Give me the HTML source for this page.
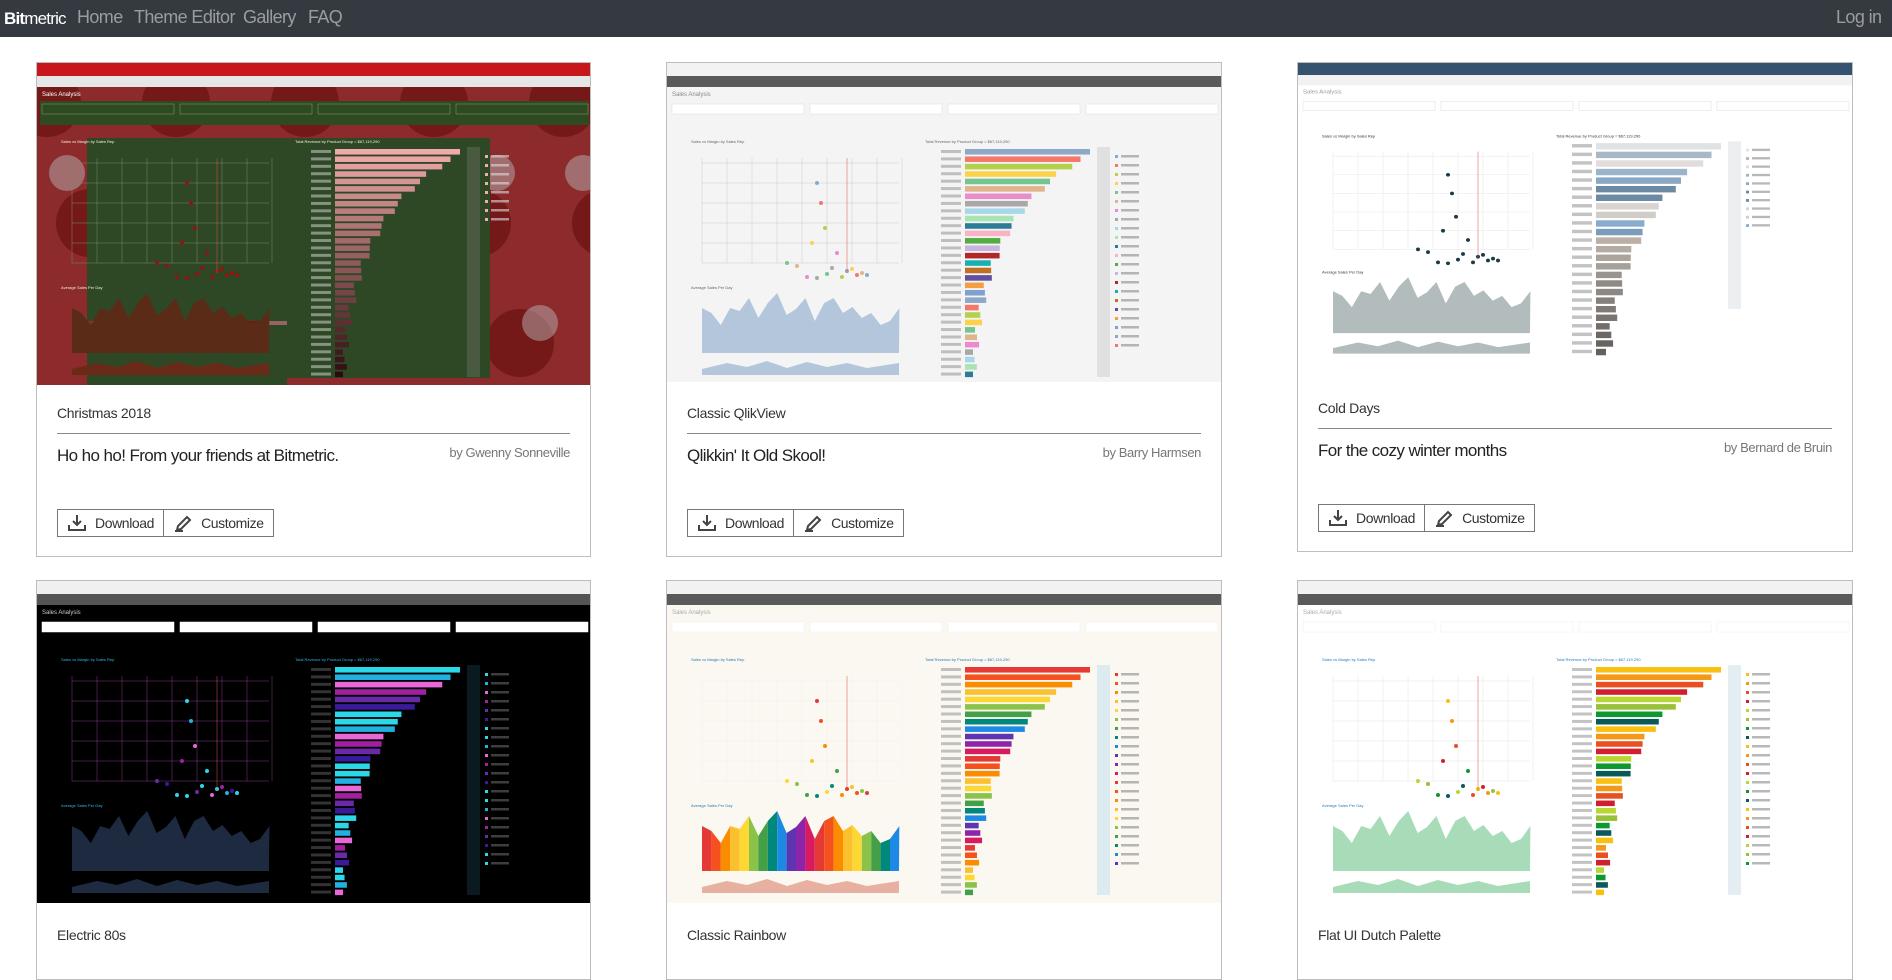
<!DOCTYPE html>
<html><head><meta charset="utf-8">
<style>
*{box-sizing:border-box;margin:0;padding:0}
html,body{width:1892px;height:931px;overflow:hidden;background:#fff;font-family:"Liberation Sans",sans-serif;color:#333}
.nav{position:absolute;left:0;top:0;width:1892px;height:37px;background:#343a40}
.nav a{position:absolute;top:7px;font-size:18px;color:#9a9da0;text-decoration:none;letter-spacing:-0.6px}
.logo{position:absolute;left:4px;top:9px;color:#fff;font-size:17px;letter-spacing:-0.8px}
.logo b{font-weight:bold}
.card{position:absolute;border:1px solid #bdbdbd;background:#fff}
.img{position:absolute;left:0;top:0;width:100%;overflow:hidden}
.img svg{display:block}
.ttl{position:absolute;left:20px;font-size:14px;color:#333;letter-spacing:-0.3px}
.hr{position:absolute;left:20px;right:20px;height:1px;background:#888}
.desc{position:absolute;left:20px;font-size:17px;color:#222;letter-spacing:-0.6px}
.auth{position:absolute;right:20px;font-size:13px;color:#777;letter-spacing:-0.4px}
.btns{position:absolute;left:20px;height:28px;display:flex}
.btn{height:28px;border:1px solid #777;display:flex;align-items:center;padding:0 9px;font-size:14px;color:#333;letter-spacing:-0.4px;background:#fff}
.btn+.btn{border-left:none}
.btn svg{margin-right:8px}
</style></head><body>
<div class="nav">
<div class="logo"><b>Bit</b>metric</div>
<a style="left:77px">Home</a>
<a style="left:134px">Theme Editor</a>
<a style="left:243px">Gallery</a>
<a style="left:308px">FAQ</a>
<a style="left:1836px">Log in</a>
</div>

<div class="card" style="left:36px;top:62px;width:555px;height:495px">
<div class="img" id="d1" style="height:322px"></div>
<div class="ttl" style="top:342px">Christmas 2018</div>
<div class="hr" style="top:370px"></div>
<div class="desc" style="top:383px">Ho ho ho! From your friends at Bitmetric.</div>
<div class="auth" style="top:382px">by Gwenny Sonneville</div>
<div class="btns" style="top:446px"><div class="btn"><svg width="20" height="18" viewBox="0 0 20 18"><path d="M10 1v10M6 7l4 4 4-4M2 11v5h16v-5" fill="none" stroke="#444" stroke-width="2"/></svg>Download</div><div class="btn"><svg width="20" height="18" viewBox="0 0 20 18"><path d="M4 16l1-4 9-9 3 3-9 9z M2 17h8" fill="none" stroke="#444" stroke-width="2"/></svg>Customize</div></div>
</div>

<div class="card" style="left:666px;top:62px;width:556px;height:495px">
<div class="img" id="d2" style="height:319px"></div>
<div class="ttl" style="top:342px">Classic QlikView</div>
<div class="hr" style="top:370px"></div>
<div class="desc" style="top:383px">Qlikkin' It Old Skool!</div>
<div class="auth" style="top:382px">by Barry Harmsen</div>
<div class="btns" style="top:446px"><div class="btn"><svg width="20" height="18" viewBox="0 0 20 18"><path d="M10 1v10M6 7l4 4 4-4M2 11v5h16v-5" fill="none" stroke="#444" stroke-width="2"/></svg>Download</div><div class="btn"><svg width="20" height="18" viewBox="0 0 20 18"><path d="M4 16l1-4 9-9 3 3-9 9z M2 17h8" fill="none" stroke="#444" stroke-width="2"/></svg>Customize</div></div>
</div>

<div class="card" style="left:1297px;top:62px;width:556px;height:490px">
<div class="img" id="d3" style="height:300px"></div>
<div class="ttl" style="top:337px">Cold Days</div>
<div class="hr" style="top:365px"></div>
<div class="desc" style="top:378px">For the cozy winter months</div>
<div class="auth" style="top:377px">by Bernard de Bruin</div>
<div class="btns" style="top:441px"><div class="btn"><svg width="20" height="18" viewBox="0 0 20 18"><path d="M10 1v10M6 7l4 4 4-4M2 11v5h16v-5" fill="none" stroke="#444" stroke-width="2"/></svg>Download</div><div class="btn"><svg width="20" height="18" viewBox="0 0 20 18"><path d="M4 16l1-4 9-9 3 3-9 9z M2 17h8" fill="none" stroke="#444" stroke-width="2"/></svg>Customize</div></div>
</div>

<div class="card" style="left:36px;top:580px;width:555px;height:400px">
<div class="img" id="d4" style="height:322px"></div>
<div class="ttl" style="top:346px">Electric 80s</div>
</div>
<div class="card" style="left:666px;top:580px;width:556px;height:400px">
<div class="img" id="d5" style="height:322px"></div>
<div class="ttl" style="top:346px">Classic Rainbow</div>
</div>
<div class="card" style="left:1297px;top:580px;width:556px;height:400px">
<div class="img" id="d6" style="height:322px"></div>
<div class="ttl" style="top:346px">Flat UI Dutch Palette</div>
</div>

<script>
function dash(id,t){
 var W=555,H=id=='d3'?300:322;var s='<svg width="'+W+'" height="'+H+'" viewBox="0 0 555 322" preserveAspectRatio="none">';
 s+='<rect width="555" height="322" fill="'+t.bg+'"/>';
 if(t.xmas){for(var i=0;i<14;i++){s+='<circle cx="'+(i*43+10)+'" cy="'+((i%3)*120+40)+'" r="34" fill="#6e1414" opacity=".8"/><circle cx="'+(i*43+30)+'" cy="'+((i%2)*150+110)+'" r="18" fill="#b8b0b0" opacity=".5"/>';}}
 s+='<rect width="555" height="13" fill="'+t.tb1+'"/><rect y="13" width="555" height="11" fill="'+t.tb2+'"/>';
 s+='<text x="5" y="33" font-size="6" fill="'+t.tx+'" font-family="Liberation Sans">Sales Analysis</text>';
 if(t.fp)s+='<rect x="3" y="38" width="549" height="24" fill="'+t.fp+'"/>';
 for(var i=0;i<4;i++)s+='<rect x="'+(5+i*138)+'" y="41" width="132" height="10" fill="'+t.fb+'" stroke="'+t.fs+'" stroke-width=".5"/>';
 if(t.pan){s+='<rect x="50" y="75" width="200" height="183" fill="'+t.pan+'"/><rect x="50" y="262" width="200" height="115" fill="'+t.pan+'"/><rect x="250" y="75" width="203" height="240" fill="'+t.pan+'"/>';}
 s+='<text x="24" y="80" font-size="4" fill="'+t.tt+'" font-family="Liberation Sans">Sales vs Margin by Sales Rep</text>';
 s+='<text x="258" y="80" font-size="4" fill="'+t.tt+'" font-family="Liberation Sans">Total Revenue by Product Group = $67,119,290</text>';
 for(var i=0;i<9;i++)s+='<line x1="'+(35+i*25)+'" y1="95" x2="'+(35+i*25)+'" y2="200" stroke="'+t.grid+'" stroke-width=".5"/>';
 for(var i=0;i<6;i++)s+='<line x1="35" y1="'+(100+i*20)+'" x2="232" y2="'+(100+i*20)+'" stroke="'+t.grid+'" stroke-width=".5"/>';
 var pts=[[170,120,0],[174,140,1],[178,165,2],[165,180,3],[140,200,4],[150,203,5],[190,190,6],[185,205,7],[200,208,0],[210,212,1],[195,214,2],[205,206,3],[180,211,4],[215,210,5],[160,214,6],[170,215,7],[220,212,0]];
 pts.forEach(function(p){s+='<circle cx="'+(p[0]-20)+'" cy="'+p[1]+'" r="2" fill="'+(t.dot||t.bars[p[2]%t.bars.length])+'"/>';});
 s+='<line x1="180" y1="95" x2="180" y2="210" stroke="#e05040" stroke-width=".5"/>';
 var a='M35 290';var ys=[245,250,262,245,248,235,255,240,230,252,246,235,258,240,235,250,244,255,250,262,258,245];
 ys.forEach(function(y,i){a+=' L'+(35+i*9.4)+' '+y;});a+=' L232 290 Z';
 s+='<text x="24" y="226" font-size="4" fill="'+t.tt+'" font-family="Liberation Sans">Average Sales Per Day</text>';
 if(t.rainbow){for(var i=0;i<21;i++)s+='<clipPath id="c'+id+i+'"><rect x="'+(35+i*9.4)+'" y="220" width="9.4" height="80"/></clipPath><path d="'+a+'" fill="'+t.bars[i%t.bars.length]+'" clip-path="url(#c'+id+i+')"/>';}
 else s+='<path d="'+a+'" fill="'+t.area+'"/>';
 s+='<path d="M35 306 L60 300 L80 304 L100 298 L120 305 L140 299 L160 304 L180 300 L200 305 L232 300 L232 312 L35 312Z" fill="'+t.area2+'"/>';
 var n=t.n||31,bh=(230/n);
 for(var i=0;i<n;i++){var w=Math.max(8,125*Math.pow(0.9,i)+(i%3)*3);var c=t.bars[i%t.bars.length];if(t.grad)c=t.grad(i,n);
  s+='<rect x="298" y="'+(86+i*bh)+'" width="'+w+'" height="'+(bh*0.75)+'" fill="'+c+'"/>';
  s+='<rect x="'+(274)+'" y="'+(87+i*bh)+'" width="20" height="'+(bh*0.4)+'" fill="'+t.lbl+'" opacity=".5"/>';}
 s+='<rect x="430" y="84" width="13" height="'+(t.n?180:230)+'" fill="'+t.sb+'"/>';
 for(var i=0;i<(t.legend||22);i++)s+='<rect x="448" y="'+(92+i*9)+'" width="3" height="3" fill="'+t.bars[i%t.bars.length]+'"/><rect x="454" y="'+(92+i*9)+'" width="18" height="2.5" fill="'+t.lbl+'" opacity=".6"/>';
 s+='</svg>';document.getElementById(id).innerHTML=s;}
var rb=['#e53935','#f4511e','#fb8c00','#fbc02d','#fdd835','#8bc34a','#43a047','#00897b','#1e88e5','#5e35b1','#8e24aa','#d81b60'];
dash('d1',{xmas:1,bg:'#8c2a2c',tb1:'#c8161d',tb2:'#e6e6e6',tx:'#fff',fp:'#2e4a22',fb:'#2e4a22',fs:'#8a9a70',pan:'#2e4826',tt:'#f0f0e0',grid:'#7a8a60',dot:'#9a1010',area:'#5a2c18',area2:'#6a2a18',bars:['#e8b0b0'],grad:function(i,n){var k=i/n;return 'rgb('+Math.round(240-200*k)+','+Math.round(170-165*k)+','+Math.round(170-160*k)+')';},lbl:'#ddd',sb:'#4a5a40',legend:8});
dash('d2',{bg:'#f4f4f4',tb1:'#f2f2f2',tb2:'#5a5a5a',tx:'#888',fb:'#fff',fs:'#ddd',tt:'#666',grid:'#ccc',area:'#b4c6dc',area2:'#b4c6dc',bars:['#8ea9c8','#f4786a','#b4d04c','#fcd24c','#76c490','#e0b48c','#e88ccc','#a8a8a8','#a8d8e8','#a8e4b4','#2c7c98','#f8b4c4','#54ac44','#c8b4e0','#b02828','#18b0b0','#c07020','#6050a0','#f0a040','#80a0d0'],lbl:'#888',sb:'#e0e0e0'});
dash('d3',{bg:'#fff',tb1:'#35536e',tb2:'#f2f2f2',tx:'#999',fb:'#fff',fs:'#ddd',tt:'#333',grid:'#e4e4e4',dot:'#1e3a48',area:'#b2bcbc',area2:'#b2bcbc',bars:['#dfe3e6','#a8b8c6','#e2dcdc','#9ab4cc','#8aa8c4','#6c8aa4','#6c8aa4','#d8d4d0','#d0cdc8','#8aaccc','#7c9cbc','#bcb0a4','#b4aca4','#aaa49c','#a4a09a','#9a948e','#908a84','#8c8884','#86807a','#807a74','#7a7470','#746e6a','#6e6864','#686460','#64605c','#5e5a56','#585452'],lbl:'#888',sb:'#eceff2',n:25,legend:10});
dash('d4',{bg:'#000',tb1:'#f0f0f0',tb2:'#555',tx:'#ccc',fb:'#fff',fs:'#fff',tt:'#2ab8e8',grid:'#8a3a8a',area:'#1e2a40',area2:'#1e2a40',bars:['#2ad8e8','#22b0e0','#e868d8','#a020a0','#6a2aa8','#3a1a98','#2ad8e8'],lbl:'#666',sb:'#0a1a20'});
dash('d5',{bg:'#faf8f0',tb1:'#f2f2f2',tb2:'#5a5a5a',tx:'#aaa',fb:'#fff',fs:'#eee',tt:'#2a7ab8',grid:'#eee',rainbow:1,area:'#ccc',area2:'#e8b0a0',bars:rb.concat(['#e53935','#f4511e','#fb8c00','#fbc02d','#fdd835','#8bc34a','#43a047','#00897b','#1e88e5','#5e35b1','#8e24aa','#d81b60']),lbl:'#888',sb:'#dcebf0'});
dash('d6',{bg:'#fff',tb1:'#f2f2f2',tb2:'#5a5a5a',tx:'#aaa',fb:'#fff',fs:'#eee',tt:'#2a7ab8',grid:'#e6e6e6',area:'#a8dcb8',area2:'#a8dcb8',bars:['#f8c010','#f49818','#e85020','#d02030','#b8d830','#98c038','#109830','#0a5a5a','#f8c010','#f49818','#e85020','#d02030','#b8d830','#109830','#0a5a5a'],lbl:'#888',sb:'#e4eef2'});
</script>
</body></html>
